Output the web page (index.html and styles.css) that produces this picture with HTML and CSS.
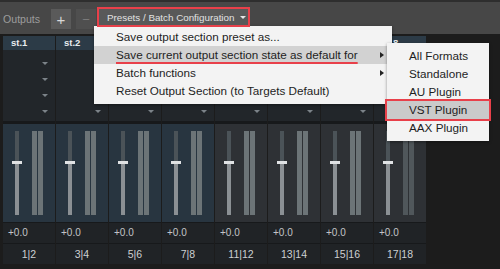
FILE: index.html
```html
<!DOCTYPE html>
<html>
<head>
<meta charset="utf-8">
<link rel="stylesheet" href="styles.css">
</head>
<body>
<div class="app">
  <div class="topbar">
    <span class="title">Outputs</span>
    <span class="btn plus">+</span>
    <span class="btn minus">&minus;</span>
    <span class="btn presets">Presets / Batch Configuration <span class="caret"></span></span>
  </div>
  <div class="channels">
    <div class="ch blue">
      <div class="hdr">st.1</div>
      <div class="sel"><i></i><i></i><i></i><i></i></div>
      <div class="fader"><div class="track"><b class="up"></b><b class="knob"></b><b class="down"></b></div><div class="meter"><b></b><b></b></div></div>
      <div class="val">+0.0</div>
      <div class="lbl">1|2</div>
    </div>
    <div class="ch blue">
      <div class="hdr">st.2</div>
      <div class="sel"><i></i><i></i><i></i><i></i></div>
      <div class="fader"><div class="track"><b class="up"></b><b class="knob"></b><b class="down"></b></div><div class="meter"><b></b><b></b></div></div>
      <div class="val">+0.0</div>
      <div class="lbl">3|4</div>
    </div>
    <div class="ch blue">
      <div class="hdr"></div>
      <div class="sel"><i></i><i></i><i></i><i></i></div>
      <div class="fader"><div class="track"><b class="up"></b><b class="knob"></b><b class="down"></b></div><div class="meter"><b></b><b></b></div></div>
      <div class="val">+0.0</div>
      <div class="lbl">5|6</div>
    </div>
    <div class="ch blue">
      <div class="hdr"></div>
      <div class="sel"><i></i><i></i><i></i><i></i></div>
      <div class="fader"><div class="track"><b class="up"></b><b class="knob"></b><b class="down"></b></div><div class="meter"><b></b><b></b></div></div>
      <div class="val">+0.0</div>
      <div class="lbl">7|8</div>
    </div>
    <div class="ch gray">
      <div class="hdr"></div>
      <div class="sel"><i></i><i></i><i></i><i></i></div>
      <div class="fader"><div class="track"><b class="up"></b><b class="knob"></b><b class="down"></b></div><div class="meter"><b></b><b></b></div></div>
      <div class="val">+0.0</div>
      <div class="lbl">11|12</div>
    </div>
    <div class="ch gray">
      <div class="hdr"></div>
      <div class="sel"><i></i><i></i><i></i><i></i></div>
      <div class="fader"><div class="track"><b class="up"></b><b class="knob"></b><b class="down"></b></div><div class="meter"><b></b><b></b></div></div>
      <div class="val">+0.0</div>
      <div class="lbl">13|14</div>
    </div>
    <div class="ch gray">
      <div class="hdr"></div>
      <div class="sel"><i></i><i></i><i></i><i></i></div>
      <div class="fader"><div class="track"><b class="up"></b><b class="knob"></b><b class="down"></b></div><div class="meter"><b></b><b></b></div></div>
      <div class="val">+0.0</div>
      <div class="lbl">15|16</div>
    </div>
    <div class="ch gray dim">
      <div class="hdr">st.8</div>
      <div class="sel"><i></i><i></i><i></i><i></i></div>
      <div class="fader"><div class="track"><b class="up"></b><b class="knob"></b><b class="down"></b></div><div class="meter"><b></b><b></b></div></div>
      <div class="val">+0.0</div>
      <div class="lbl">17|18</div>
    </div>
  </div>

  <div class="menu">
    <div class="item">Save output section preset as...</div>
    <div class="item active"><span class="mark">Save current output section state as default for</span><span class="arrow"></span></div>
    <div class="item">Batch functions<span class="arrow"></span></div>
    <div class="item">Reset Output Section (to Targets Default)</div>
  </div>

  <div class="submenu">
    <div class="item">All Formats</div>
    <div class="item">Standalone</div>
    <div class="item">AU Plugin</div>
    <div class="item active boxed">VST Plugin</div>
    <div class="item">AAX Plugin</div>
  </div>
</div>
</body>
</html>
```

FILE: styles.css
```css
* { box-sizing: border-box; }
html, body { margin: 0; padding: 0; }
body {
  width: 500px;
  height: 269px;
  overflow: hidden;
  background: #1c1c1c;
  font-family: "Liberation Sans", Arial, sans-serif;
}
.app { position: relative; width: 500px; height: 269px; }

/* top bar */
.topbar {
  height: 34px;
  background: #474747;
  border-top: 2px solid #2e2e2e;
  display: flex;
  align-items: flex-start;
  padding: 7px 0 0 3px;
}
.title {
  color: #9c9c9c;
  font-size: 10.6px;
  line-height: 18px;
  margin-top: 1px;
  width: 48px;
}
.btn {
  height: 20px;
  display: flex;
  align-items: center;
  justify-content: center;
  white-space: nowrap;
}
.plus {
  width: 20px;
  background: #5a5a5a;
  color: #d8d8d8;
  font-size: 15px;
}
.minus {
  width: 20px;
  margin-left: 5px;
  background: #4f4f4f;
  color: #7a7a7a;
  font-size: 13px;
}
.presets {
  position: relative;
  z-index: 3;
  margin-left: 3px;
  width: 149px;
  height: 16px;
  background: #595959;
  color: #e2e2e2;
  font-size: 9.8px;
  justify-content: flex-start;
  padding-left: 8px;
  outline: 2px solid #e8404a;
}
.caret {
  margin-left: 6px;
  width: 0;
  height: 0;
  border-left: 3px solid transparent;
  border-right: 3px solid transparent;
  border-top: 3px solid #e6e6e6;
}

/* channels */
.channels {
  display: flex;
  gap: 1px;
  padding: 2px 0 0 3px;
  height: 230px;
  background: #1c1c1c;
}
.ch {
  width: 52px;
  display: flex;
  flex-direction: column;
  background: #17191b;
}
.hdr {
  height: 14px;
  background: #2c3b47;
  color: #e8ecef;
  font-weight: bold;
  font-size: 9.5px;
  line-height: 14px;
  padding-left: 8px;
}
.sel {
  height: 71px;
  background: #22262a;
  padding-top: 5px;
  display: flex;
  flex-direction: column;
}
.sel i {
  height: 16px;
  display: flex;
  justify-content: flex-end;
  align-items: center;
  padding-right: 7px;
}
.sel i::after {
  content: "";
  border-left: 3px solid transparent;
  border-right: 3px solid transparent;
  border-top: 3px solid #7c8389;
}
.fader {
  margin-top: 3px;
  height: 98px;
  padding: 7px 0 0 12px;
  display: flex;
  align-items: flex-start;
}
.blue .fader { background: #283540; }
.gray .fader { background: #2e3135; }
.track {
  width: 4px;
  height: 84px;
  display: flex;
  flex-direction: column;
}
.track b { display: block; }
.track .up { height: 30px; background: #4b5358; }
.track .knob { height: 3px; margin: 0 -3px; background: #e0e2e4; }
.track .down { flex: 1; background: #8b9094; }
.meter {
  margin-left: 13px;
  height: 84px;
  display: flex;
  gap: 1px;
}
.meter b { width: 5px; background: #6c7477; }
.dim .meter b { background: #50575b; }
.val {
  margin-top: 1px;
  height: 20px;
  background: #202326;
  color: #c2c4c6;
  font-size: 10px;
  line-height: 20px;
  padding-left: 5px;
}
.lbl {
  margin-top: 1px;
  height: 20px;
  background: #202326;
  color: #cdd0d2;
  font-size: 10.5px;
  line-height: 20px;
  text-align: center;
}

/* menus */
.menu, .submenu {
  position: absolute;
  background: #f3f3f3;
  color: #1e1e1e;
  font-size: 11.7px;
  box-shadow: 0 1px 3px rgba(0,0,0,0.4);
  z-index: 2;
}
.menu {
  left: 94px;
  top: 26px;
  width: 298px;
  padding: 2px 0 4px;
}
.submenu {
  left: 387px;
  top: 43px;
  width: 102px;
  padding: 4px 0;
}
.item {
  height: 18px;
  line-height: 18px;
  padding-left: 22px;
  padding-right: 8px;
  display: flex;
  align-items: center;
  white-space: nowrap;
}
.item.active { background: #d2d2d2; }
.submenu .item.active { background: #cacaca; }
.boxed { outline: 2px solid #e8404a; position: relative; }
.mark {
  text-decoration: underline;
  text-decoration-color: #e8404a;
  text-decoration-thickness: 2px;
  text-underline-offset: 3px;
}
.arrow {
  margin-left: auto;
  width: 0;
  height: 0;
  border-top: 3.5px solid transparent;
  border-bottom: 3.5px solid transparent;
  border-left: 4px solid #222;
}
```
